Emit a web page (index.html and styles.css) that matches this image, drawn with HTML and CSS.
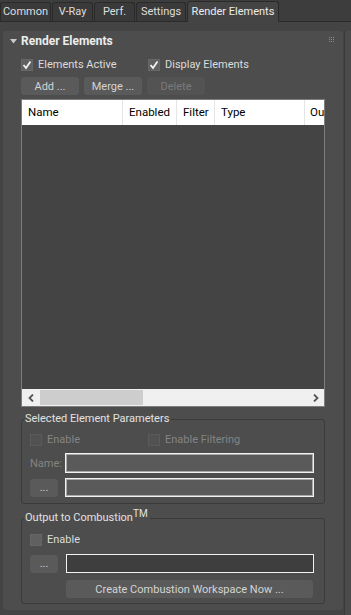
FILE: index.html
```html
<!DOCTYPE html>
<html lang="en">
<head>
  <meta charset="UTF-8" />
  <meta name="viewport" content="width=device-width, initial-scale=1.0" />
  <title>Render Setup – Render Elements</title>
  <link rel="stylesheet" href="styles.css">
</head>
<body>

  <nav class="tabs">
    <div class="tab t-common">Common</div>
    <div class="tab t-vray">V-Ray</div>
    <div class="tab t-perf">Perf.</div>
    <div class="tab t-settings">Settings</div>
    <div class="tab t-elements active">Render Elements</div>
  </nav>

  <div class="main">
    <section class="panel">
      <div class="rollout-head">
        <svg class="arrow" width="7" height="5" viewBox="0 0 7 5"><path d="M0 0 H7 L3.5 4.5 Z" fill="#c8c8c8"/></svg>
        <span>Render Elements</span>
        <svg class="grip" width="6" height="6" viewBox="0 0 6 6" fill="#8a8a8a">
          <rect x="0" y="0" width="1" height="1"/><rect x="2" y="0" width="1" height="1"/><rect x="4" y="0" width="1" height="1"/>
          <rect x="0" y="2" width="1" height="1"/><rect x="2" y="2" width="1" height="1"/><rect x="4" y="2" width="1" height="1"/>
          <rect x="0" y="4" width="1" height="1"/><rect x="2" y="4" width="1" height="1"/><rect x="4" y="4" width="1" height="1"/>
        </svg>
      </div>

      <div class="check-row">
        <label class="check"><span class="box checked"><svg width="10" height="10" viewBox="0 0 10 10"><path d="M1.5 5 L4 8 L8.5 1.5" fill="none" stroke="#f2f2f2" stroke-width="1.8"/></svg></span>Elements Active</label>
        <label class="check"><span class="box checked"><svg width="10" height="10" viewBox="0 0 10 10"><path d="M1.5 5 L4 8 L8.5 1.5" fill="none" stroke="#f2f2f2" stroke-width="1.8"/></svg></span>Display Elements</label>
      </div>

      <div class="btn-row">
        <button class="btn">Add ...</button>
        <button class="btn">Merge ...</button>
        <button class="btn" disabled>Delete</button>
      </div>

      <div class="list">
        <div class="list-head">
          <div class="col c-name">Name</div>
          <div class="col c-enabled">Enabled</div>
          <div class="col c-filter">Filter</div>
          <div class="col c-type">Type</div>
          <div class="col c-out">Ou</div>
        </div>
        <div class="list-body"></div>
        <div class="hscroll">
          <svg class="chev" width="6" height="8" viewBox="0 0 6 8"><path d="M5 0.5 L1.5 4 L5 7.5" fill="none" stroke="#555" stroke-width="1.8"/></svg>
          <div class="track"><div class="thumb"></div></div>
          <svg class="chev" width="6" height="8" viewBox="0 0 6 8"><path d="M1 0.5 L4.5 4 L1 7.5" fill="none" stroke="#555" stroke-width="1.8"/></svg>
        </div>
      </div>

      <fieldset class="group">
        <legend>Selected Element Parameters</legend>
        <div class="check-row inner">
          <label class="check off"><span class="box"></span>Enable</label>
          <label class="check off"><span class="box"></span>Enable Filtering</label>
        </div>
        <div class="field-grid">
          <span class="field-label">Name:</span>
          <div class="input"></div>
          <button class="btn small">...</button>
          <div class="input"></div>
        </div>
      </fieldset>

      <fieldset class="group second">
        <legend>Output to Combustion<sup>TM</sup></legend>
        <div class="check-row inner">
          <label class="check"><span class="box"></span>Enable</label>
        </div>
        <div class="field-grid">
          <button class="btn small">...</button>
          <div class="input dark"></div>
          <span></span>
          <button class="btn wide">Create Combustion Workspace Now ...</button>
        </div>
      </fieldset>
    </section>

    <div class="side"></div>
  </div>

</body>
</html>
```

FILE: styles.css
```css
/* Base */
* {
  box-sizing: border-box;
  margin: 0;
  padding: 0;
}

body {
  font-family: Roboto, "Liberation Sans", sans-serif;
  font-size: 11px;
  background: #444444;
  color: #dcdcdc;
  width: 351px;
  height: 615px;
  overflow: hidden;
}

/* Tabs */
.tabs {
  display: flex;
  align-items: flex-end;
  gap: 1px;
  height: 22px;
  border-bottom: 1px solid #2a2a2a;
  background: #3d3d3d;
}

.tab {
  height: 19px;
  line-height: 17px;
  text-align: center;
  white-space: nowrap;
  border: 1px solid #2a2a2a;
  border-bottom: none;
  border-radius: 3px 3px 0 0;
  background: #3a3a3a;
  color: #dedede;
  font-size: 11px;
}

.t-common { width: 51px; }
.t-vray { width: 41px; }
.t-perf { width: 41px; }
.t-settings { width: 50px; }
.t-elements { width: 92px; }

.tab.active {
  height: 21px;
  line-height: 19px;
  margin-bottom: -1px;
  background: #444444;
  color: #ececec;
}

/* Layout */
.main {
  display: flex;
  padding-top: 9px;
  height: 593px;
}

.panel {
  width: 340px;
  margin-left: 3px;
  height: 579px;
  background: #4d4d4d;
  border-radius: 3px;
  padding: 0 18px 0 18px;
}

.side {
  flex: 1;
  margin-left: 1px;
  background: #4b4b4b;
  border-left: 1px solid #3a3a3a;
}

/* Rollout header */
.rollout-head {
  display: flex;
  align-items: center;
  height: 20px;
  font-size: 12px;
  font-weight: bold;
  color: #ececec;
}

.rollout-head .arrow {
  margin-left: -11px;
  margin-right: 4px;
}

.rollout-head .grip {
  margin-left: auto;
  margin-right: -10px;
  margin-top: -2px;
}

/* Checkboxes */
.check-row {
  display: grid;
  grid-template-columns: 127px 1fr;
  margin-top: 7px;
  height: 12px;
}

.check {
  display: flex;
  align-items: center;
  gap: 5px;
  white-space: nowrap;
}

.box {
  width: 12px;
  height: 12px;
  background: #606060;
  border: 1px solid #666666;
  display: flex;
  align-items: center;
  justify-content: center;
}

.check.off {
  color: #848484;
}

.check.off .box {
  background: #525252;
  border-color: #5a5a5a;
}

/* Buttons */
.btn-row {
  display: flex;
  gap: 5px;
  margin-top: 7px;
}

.btn {
  width: 58px;
  height: 18px;
  border: none;
  border-radius: 3px;
  background: #5a5a5a;
  color: #d4d4d4;
  font-family: inherit;
  font-size: 11px;
}

.btn:disabled {
  background: #535353;
  color: #7a7a7a;
}

.btn.small {
  width: 28px;
  line-height: 14px;
}

.btn.wide {
  width: 247px;
  margin-left: 1px;
}

/* Element list */
.list {
  margin-top: 4px;
  width: 304px;
  border: 1px solid #7d7d7d;
}

.list-head {
  display: flex;
  height: 25px;
  background: #ffffff;
  color: #000000;
  overflow: hidden;
}

.col {
  flex-shrink: 0;
  padding-left: 6px;
  line-height: 25px;
  border-right: 1px solid #e5e5e5;
  font-size: 11.5px;
}

.c-name { width: 101px; }
.c-enabled { width: 54px; }
.c-filter { width: 38px; }
.c-type { width: 90px; }
.c-out { border-right: none; padding-left: 5px; }

.list-body {
  height: 264px;
  background: #444444;
}

.hscroll {
  display: flex;
  align-items: center;
  height: 17px;
  background: #f0f0f0;
  padding: 0 5px 0 6px;
  gap: 6px;
}

.hscroll .track {
  flex: 1;
  height: 15px;
}

.hscroll .thumb {
  width: 103px;
  height: 15px;
  background: #cdcdcd;
}

/* Group boxes */
.group {
  margin-top: 5px;
  width: 304px;
  border: 1px solid #3a3a3a;
  border-radius: 3px;
  padding: 0 10px 6px 8px;
}

.group legend {
  margin-left: -6px;
  padding: 0 2px 0 1px;
  line-height: 14px;
  font-size: 11px;
  color: #e2e2e2;
}

.group legend sup {
  font-size: 10px;
  vertical-align: 4px;
  line-height: 0;
}

.group.second {
  margin-top: 7px;
  padding-bottom: 5px;
}

.check-row.inner {
  margin-top: 7px;
  height: 13px;
  grid-template-columns: 118px 1fr;
}

.group.second .check-row.inner {
  margin-top: 8px;
}

.field-grid {
  display: grid;
  grid-template-columns: 35px 1fr;
  row-gap: 5px;
  margin-top: 7px;
  align-items: center;
}

.group.second .field-grid {
  margin-top: 8px;
  row-gap: 7px;
}

.field-label {
  color: #848484;
}

.input {
  height: 20px;
  background: #5a5a5a;
  border: 1px solid #f2f2f2;
  box-shadow: inset 0 0 0 1px #a8a8a8;
}

.field-grid .btn.small + .input {
  height: 19px;
}

.input.dark {
  background: #3e3e3e;
  box-shadow: none;
  margin-left: 1px;
}
```
